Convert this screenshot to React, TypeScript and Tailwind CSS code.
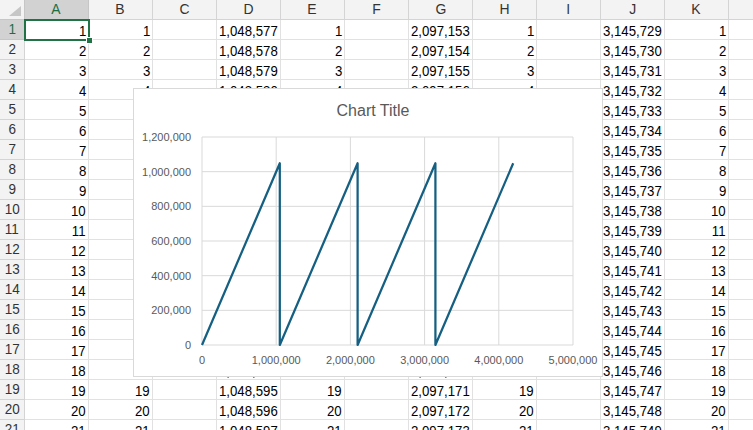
import React from "react";

const COLS = ["A", "B", "C", "D", "E", "F", "G", "H", "I", "J", "K"];
const fmt = (n: number) => n.toLocaleString("en-US");

function rowValues(n: number): string[] {
  return [
    fmt(n),
    fmt(n),
    "",
    fmt(1048576 + n),
    fmt(n),
    "",
    fmt(2097152 + n),
    fmt(n),
    "",
    fmt(3145728 + n),
    fmt(n),
  ];
}

const cellFont = {
  fontFamily: '"Liberation Sans", Arial, sans-serif',
};

function Chart() {
  const L = 69,
    T = 49,
    W = 371,
    H = 208;
  const px = (x: number) => L + (x / 5e6) * W;
  const py = (y: number) => T + H - (y / 1.2e6) * H;
  const pts: [number, number][] = [
    [0, 0],
    [1048576, 1048576],
    [1048577, 1],
    [2097152, 1048576],
    [2097153, 1],
    [3145728, 1048576],
    [3145729, 1],
    [4194304, 1048576],
  ];
  const yTicks = [0, 200000, 400000, 600000, 800000, 1000000, 1200000];
  const xTicks = [0, 1e6, 2e6, 3e6, 4e6, 5e6];
  return (
    <div className="absolute left-[133px] top-[88px] w-[470px] h-[289px] bg-white border border-[#d9d9d9]">
      <svg width="470" height="289" className="absolute left-[-1px] top-[-1px]">
        <text
          x="240"
          y="28"
          textAnchor="middle"
          fill="#595959"
          fontSize="16"
          fontFamily='"Liberation Sans", sans-serif'
        >
          Chart Title
        </text>
        {yTicks.map((t) => (
          <line key={"y" + t} x1={L} x2={L + W} y1={py(t)} y2={py(t)} stroke="#d9d9d9" strokeWidth="1" />
        ))}
        {xTicks.map((t) => (
          <line key={"x" + t} y1={T} y2={T + H} x1={px(t)} x2={px(t)} stroke="#d9d9d9" strokeWidth="1" />
        ))}
        {yTicks.map((t) => (
          <text
            key={"yl" + t}
            x={58}
            y={py(t) + 4}
            textAnchor="end"
            fill="#595959"
            fontSize="11"
            fontFamily='"Liberation Sans", sans-serif'
          >
            {fmt(t)}
          </text>
        ))}
        {xTicks.map((t) => (
          <text
            key={"xl" + t}
            x={px(t)}
            y={276}
            textAnchor="middle"
            fill="#595959"
            fontSize="11"
            fontFamily='"Liberation Sans", sans-serif'
          >
            {fmt(t)}
          </text>
        ))}
        <polyline
          points={pts.map(([x, y]) => `${px(x)},${py(y)}`).join(" ")}
          fill="none"
          stroke="#156082"
          strokeWidth="2.25"
          strokeLinejoin="round"
        />
      </svg>
    </div>
  );
}

export default function App() {
  const rows = Array.from({ length: 21 }, (_, i) => i + 1);
  return (
    <div className="relative w-[753px] h-[430px] overflow-hidden bg-white text-[#000]" style={cellFont}>
      {/* header row */}
      <div className="flex h-[20px]">
        <div className="relative w-[25px] h-[20px] shrink-0 bg-[#f3f3f3] border-r border-b border-[#c6c6c6]">
          <div className="absolute right-[3px] bottom-[3px] w-0 h-0 border-l-[12px] border-l-transparent border-b-[10px] border-b-[#c6c6c6]" />
        </div>
        {COLS.map((c, i) => (
          <div
            key={c}
            className={
              i === 0
                ? "w-[64px] shrink-0 h-[20px] flex items-center justify-center bg-[#d2d2d2] text-[#1e6e43] border-r border-b border-[#c6c6c6] text-[15px]"
                : "w-[64px] shrink-0 h-[20px] flex items-center justify-center bg-[#f3f3f3] text-[#333] border-r border-b border-[#d4d4d4] text-[15px]"
            }
          >
            <span className="inline-block scale-x-[0.93]">{c}</span>
          </div>
        ))}
        <div className="flex-1 h-[20px] bg-[#f3f3f3] border-b border-[#d4d4d4]" />
      </div>
      {rows.map((r) => (
        <div key={r} className="flex h-[20px]">
          <div
            className={
              r === 1
                ? "w-[25px] shrink-0 h-[20px] flex items-center justify-center bg-[#d2d2d2] text-[#1e6e43] border-r border-b border-[#c6c6c6] text-[15px]"
                : "w-[25px] shrink-0 h-[20px] flex items-center justify-center bg-[#f3f3f3] text-[#333] border-r border-b border-[#d4d4d4] text-[15px]"
            }
          >
            <span className="inline-block scale-x-[0.9]">{r}</span>
          </div>
          {rowValues(r).map((v, i) => (
            <div
              key={i}
              className="w-[64px] shrink-0 h-[20px] flex items-center justify-end pr-[2px] pt-[1px] border-r border-b border-[#e1e1e1] text-[15px] leading-none"
            >
              <span className="inline-block scale-x-[0.88] origin-right">{v}</span>
            </div>
          ))}
          <div className="flex-1 h-[20px] border-b border-[#e1e1e1]" />
        </div>
      ))}
      {/* selection */}
      <div className="absolute left-[24px] top-[19px] w-[66px] h-[22px] border-2 border-[#217346] pointer-events-none" />
      <div className="absolute left-[86px] top-[37px] w-[7px] h-[7px] bg-[#217346] border border-white" />
      <Chart />
    </div>
  );
}
